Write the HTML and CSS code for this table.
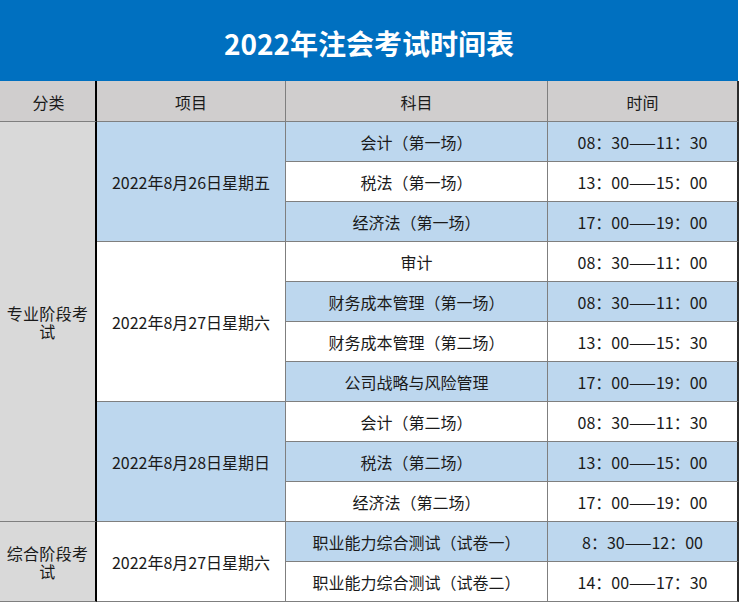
FILE: index.html
```html
<!DOCTYPE html>
<html lang="zh-CN">
<head>
<meta charset="utf-8">
<title>2022年注会考试时间表</title>
<link rel="stylesheet" href="styles.css">
</head>
<body>
<div class="page">
  <div class="title">2022年注会考试时间表</div>
  <div class="grid">
    <div class="cell head c1">分类</div>
    <div class="cell head">项目</div>
    <div class="cell head">科目</div>
    <div class="cell head c4">时间</div>

    <div class="cell cat c1 span10"><span class="cat-text">专业阶段考试</span></div>
    <div class="cell date blue span3">2022年8月26日星期五</div>
    <div class="cell blue">会计（第一场）</div>
    <div class="cell blue c4">08：30——11：30</div>
    <div class="cell">税法（第一场）</div>
    <div class="cell c4">13：00——15：00</div>
    <div class="cell blue">经济法（第一场）</div>
    <div class="cell blue c4">17：00——19：00</div>

    <div class="cell date span4">2022年8月27日星期六</div>
    <div class="cell">审计</div>
    <div class="cell c4">08：30——11：00</div>
    <div class="cell blue">财务成本管理（第一场）</div>
    <div class="cell blue c4">08：30——11：00</div>
    <div class="cell">财务成本管理（第二场）</div>
    <div class="cell c4">13：00——15：30</div>
    <div class="cell blue">公司战略与风险管理</div>
    <div class="cell blue c4">17：00——19：00</div>

    <div class="cell date blue span3">2022年8月28日星期日</div>
    <div class="cell">会计（第二场）</div>
    <div class="cell c4">08：30——11：30</div>
    <div class="cell blue">税法（第二场）</div>
    <div class="cell blue c4">13：00——15：00</div>
    <div class="cell">经济法（第二场）</div>
    <div class="cell c4">17：00——19：00</div>

    <div class="cell cat c1 span2"><span class="cat-text">综合阶段考试</span></div>
    <div class="cell date span2">2022年8月27日星期六</div>
    <div class="cell blue">职业能力综合测试（试卷一）</div>
    <div class="cell blue c4">8：30——12：00</div>
    <div class="cell">职业能力综合测试（试卷二）</div>
    <div class="cell c4">14：00——17：30</div>
  </div>
</div>
</body>
</html>
```

FILE: styles.css
```css
* {
  box-sizing: border-box;
}

html, body {
  margin: 0;
  padding: 0;
  background: #ffffff;
}

body {
  font-family: "Noto Sans CJK SC", "Noto Sans", sans-serif;
  color: #1a1a1a;
}

.page {
  width: 739px;
}

.title {
  height: 81px;
  width: 738px;
  background: #0070c0;
  color: #ffffff;
  font-size: 28px;
  font-weight: 700;
  display: flex;
  align-items: center;
  justify-content: center;
  padding-top: 4px;
}

.grid {
  display: grid;
  grid-template-columns: 97px 189px 262px 191px;
  grid-template-rows: 41px repeat(12, 40px);
}

.cell {
  display: flex;
  align-items: center;
  justify-content: center;
  text-align: center;
  font-size: 16px;
  line-height: 18px;
  background: #ffffff;
  border-right: 1px solid #7f7f7f;
  border-bottom: 1px solid #7f7f7f;
  white-space: nowrap;
  padding-top: 1px;
}

.c1 {
  border-right: 2px solid #000000;
}

.c4 {
  border-right: 2px solid #2b2b2b;
}

.head {
  background: #d0cece;
}

.head.c1 {
  padding-left: 2px;
}

.blue {
  background: #bdd7ee;
}

.cat {
  background: #d9d9d9;
  white-space: normal;
  padding: 0 6px;
}

.cat-text {
  display: block;
  width: 82px;
  letter-spacing: 0.3px;
}

.span10 { grid-row: span 10; }
.span4 { grid-row: span 4; }
.span3 { grid-row: span 3; }
.span2 { grid-row: span 2; }
```
